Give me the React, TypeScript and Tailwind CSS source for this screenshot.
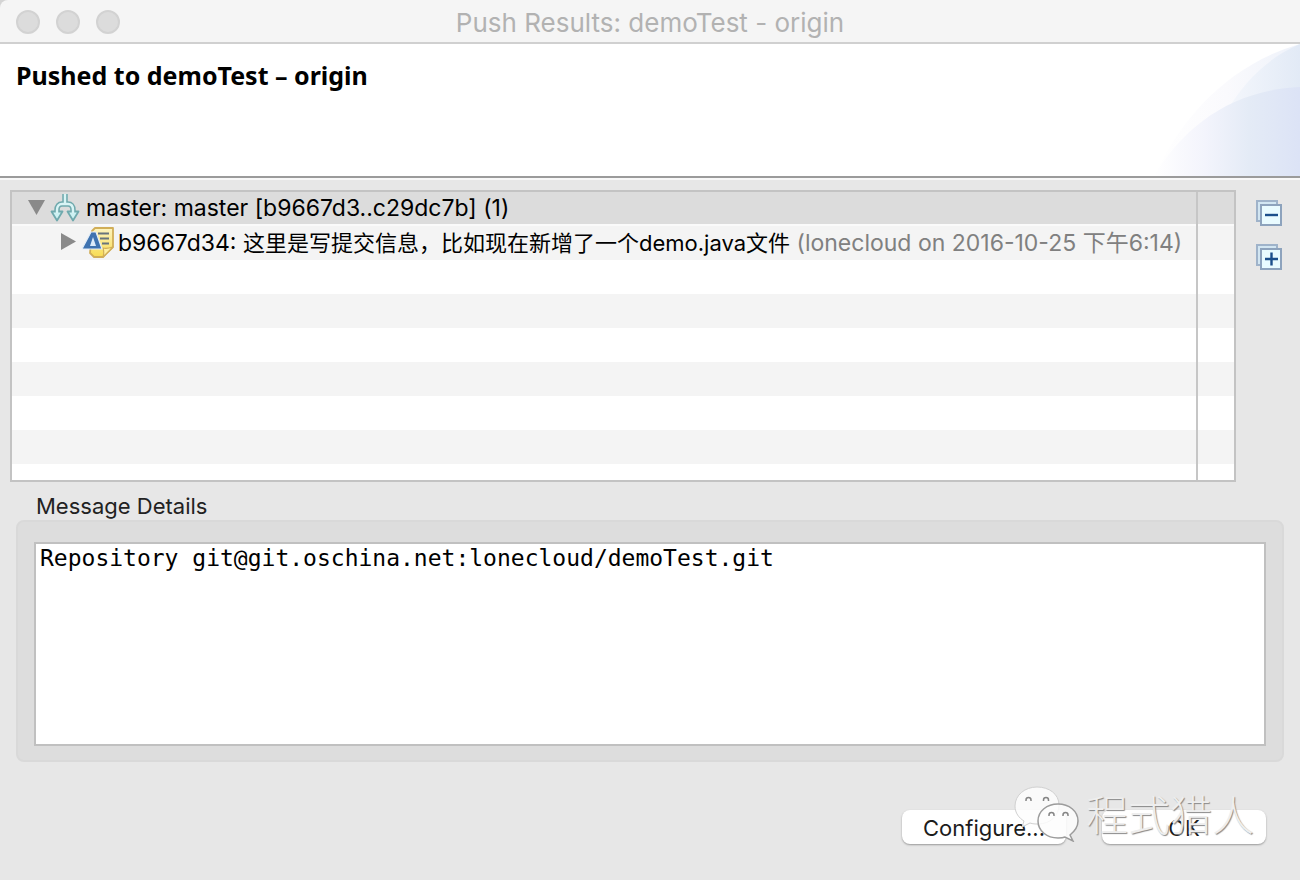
import type { ReactNode } from "react";

const emptyRows = [0, 1, 2, 3, 4, 5];

export default function App() {
  return (
    <div className="min-h-screen flex flex-col bg-[#e7e7e7] font-['Inter','Noto_Sans_CJK_SC',sans-serif] text-[22px] text-black">
      <TitleBar title="Push Results: demoTest - origin" />
      <DialogHeader title="Pushed to demoTest – origin" />

      <main className="grow flex flex-col pt-3">
        <div className="flex">
          <ResultTree />
          <div className="w-16 shrink-0 flex flex-col items-center gap-4 pt-2 pl-[2px]">
            <ToolButton label="Collapse All">
              <path d="M10 17h13" />
            </ToolButton>
            <ToolButton label="Expand All">
              <path d="M10 17h13M16.500 10.500v13" />
            </ToolButton>
          </div>
        </div>

        <MessageDetails />

        <div className="relative flex justify-end gap-9 mt-12 pr-[34px] pb-9">
          <DialogButton>Configure...</DialogButton>
          <DialogButton>OK</DialogButton>
          <Watermark />
        </div>
      </main>
    </div>
  );
}

function TitleBar({ title }: { title: string }) {
  return (
    <div className="bg-[#d4d4d4]">
      <div className="h-11 flex items-center px-4 bg-[#f5f5f5] border-b-2 border-[#d0d0d0] rounded-tl-lg">
        <div className="w-26 flex gap-4">
          <WindowDot label="Close" />
          <WindowDot label="Minimize" />
          <WindowDot label="Zoom" />
        </div>
        <h1 className="grow pt-1 text-center text-[26px] leading-9 text-[#b2b2b2]">
          {title}
        </h1>
        <div className="w-26" />
      </div>
    </div>
  );
}

function WindowDot({ label }: { label: string }) {
  return (
    <button
      type="button"
      aria-label={label}
      className="size-6 mt-[2px] rounded-full bg-[#dcdcdc] border-2 border-[#d2d2d2]"
    />
  );
}

function DialogHeader({ title }: { title: string }) {
  return (
    <header className="h-[134px] flex justify-between bg-white border-b-2 border-[#9b9b9b] shadow-[0_2px_0_#f8f8f8]">
      <h2 className="pl-4 pt-4 font-['Noto_Sans',sans-serif] font-bold text-[25px] leading-[30px]">
        {title}
      </h2>
      <svg width="150" height="132" viewBox="0 0 150 132" aria-hidden="true">
        <defs>
          <linearGradient id="outer" x1="0" x2="1">
            <stop offset="0" stopColor="#ffffff" />
            <stop offset="0.5" stopColor="#fafafd" />
            <stop offset="1" stopColor="#eef2fa" />
          </linearGradient>
          <linearGradient id="middle" x1="0" x2="1">
            <stop offset="0" stopColor="#fafbfe" />
            <stop offset="1" stopColor="#e2eaf6" />
          </linearGradient>
          <linearGradient id="inner" x1="0" x2="1">
            <stop offset="0" stopColor="#ffffff" />
            <stop offset="0.35" stopColor="#f3f4fc" />
            <stop offset="0.65" stopColor="#e4ebf6" />
            <stop offset="1" stopColor="#dce3f6" />
          </linearGradient>
        </defs>
        <path d="M4 132C32 72 80 20 150 0V132Z" fill="url(#outer)" />
        <path d="M54 132C64 74 98 22 150 0V132Z" fill="url(#middle)" />
        <path d="M4 132C34 82 82 46 150 43V132Z" fill="url(#inner)" />
      </svg>
    </header>
  );
}

function ResultTree() {
  return (
    <div
      role="tree"
      aria-label="Push results"
      className="relative grow h-[292px] ml-[10px] border-2 border-[#c3c3c3] bg-white text-[23px] overflow-hidden"
    >
      <div
        role="treeitem"
        aria-expanded="true"
        aria-selected="true"
        className="h-[34px] flex items-center pl-4 bg-[#dcdcdc] border-b-2 border-[#fafafa] whitespace-nowrap"
      >
        <svg width="18" height="16" viewBox="0 0 18 16" aria-hidden="true">
          <path d="M0 0h17L8.500 15z" fill="#8a8a8a" />
        </svg>
        <BranchIcon />
        <span className="ml-1">master: master [b9667d3..c29dc7b] (1)</span>
      </div>
      <div
        role="treeitem"
        aria-expanded="false"
        aria-selected="false"
        className="h-[34px] flex items-center pl-12 bg-[#f4f4f4] whitespace-nowrap leading-8"
      >
        <svg width="16" height="20" viewBox="0 0 16 20" aria-hidden="true">
          <path d="M1 0v17l15-8.500z" fill="#8a8a8a" />
        </svg>
        <CommitIcon />
        <span className="ml-1">
          b9667d34:{" "}
          <span className="text-[22px]">
            这里是写提交信息，比如现在新增了一个demo.java文件
          </span>{" "}
          <span className="text-[#808080]">
            (lonecloud on 2016-10-25 下午6:14)
          </span>
        </span>
      </div>
      {emptyRows.map((row) => (
        <div key={row} className="h-[34px] odd:bg-white even:bg-[#f4f4f4]" />
      ))}
      <div className="absolute inset-y-0 right-9 w-[2px] bg-[#c6c6c6]" />
    </div>
  );
}

function BranchIcon() {
  return (
    <svg
      className="ml-1"
      width="32"
      height="30"
      viewBox="0 0 32 30"
      aria-hidden="true"
    >
      <path
        d="M15 1v9M7 20v-3c0-4 2-6 5-6h6c3 0 5 2 5 6v3"
        fill="none"
        stroke="#6fa9ad"
        strokeWidth="5.500"
      />
      <path
        d="M1.500 18.500h11L7 27.500zM17.500 18.500h11L23 27.500z"
        fill="#cdf1f2"
        stroke="#6fa9ad"
        strokeWidth="1.800"
        strokeLinejoin="round"
      />
      <path
        d="M15 1v10M7 20v-3c0-4 2-6 5-6h6c3 0 5 2 5 6v3"
        fill="none"
        stroke="#d9f4f5"
        strokeWidth="2.400"
      />
    </svg>
  );
}

function CommitIcon() {
  return (
    <svg
      className="ml-[6px]"
      width="32"
      height="32"
      viewBox="0 0 32 32"
      aria-hidden="true"
    >
      <defs>
        <linearGradient id="note" x1="0" y1="0" x2="0" y2="1">
          <stop offset="0" stopColor="#fdf4c0" />
          <stop offset="1" stopColor="#f8dc52" />
        </linearGradient>
      </defs>
      <path
        d="M10 4l3-3h18v19l-10 10H12l-4-4z"
        fill="url(#note)"
        stroke="#d1ae58"
        strokeWidth="1.800"
        strokeLinejoin="round"
      />
      <path
        d="M21 30c1-3 1-6 0-9 3 1 7 0 10-1z"
        fill="#fff0a0"
        stroke="#d1ae58"
        strokeWidth="1.200"
        strokeLinejoin="round"
      />
      <path
        d="M16 6.500h11M18 11.500h9M20 16.500h7"
        stroke="#68747c"
        strokeWidth="1.800"
      />
      <path
        d="M0 22L9 5h5l6 17z"
        fill="#3f73b0"
        stroke="#e4eef8"
        strokeWidth="1.200"
      />
      <path d="M8 19l3-9 3 9z" fill="#dcebfa" />
    </svg>
  );
}

function ToolButton({
  label,
  children,
}: {
  label: string;
  children: ReactNode;
}) {
  return (
    <button type="button" aria-label={label}>
      <svg className="block" width="28" height="28" viewBox="0 0 28 28">
        <path d="M2 3h20v20H2z" fill="#d2e6f2" stroke="#9fb3ca" strokeWidth="2" />
        <path d="M6 7h20v20H6z" fill="#e9fbff" stroke="#8da3bd" strokeWidth="2" />
        <g stroke="#1c4f8b" strokeWidth="2.400">
          {children}
        </g>
      </svg>
    </button>
  );
}

function MessageDetails() {
  return (
    <section className="px-4 pt-2">
      <label
        htmlFor="details"
        className="block pl-5 pt-[2px] leading-7 text-[#222222]"
      >
        Message Details
      </label>
      <div className="px-4 pt-5 pb-[14px] bg-[#dddddd] border-2 border-[#d9d9d9] rounded-lg">
        <textarea
          id="details"
          readOnly
          className="block w-full h-[204px] px-1 bg-white border-2 border-[#c0c0c0] resize-none outline-none font-['DejaVu_Sans_Mono',monospace] text-[23px] leading-7"
          defaultValue="Repository git@git.oschina.net:lonecloud/demoTest.git"
        />
      </div>
    </section>
  );
}

function DialogButton({ children }: { children: ReactNode }) {
  return (
    <button
      type="button"
      className="w-[164px] h-[34px] rounded-lg bg-white text-center leading-9 text-[#1c1c1c] shadow-[0_1px_2px_#999999]"
    >
      {children}
    </button>
  );
}

function Watermark() {
  return (
    <div className="absolute right-[46px] -top-[26px] flex items-center gap-1 pointer-events-none">
      <svg width="68" height="58" viewBox="0 0 68 58" aria-hidden="true">
        <path
          d="M23 3C11 3 1 11 1 22c0 7 4 12 9 15l-2 6 8-4c3 1 5 1 8 1 12 0 21-8 21-19S35 3 23 3z"
          fill="#fdfdfd"
          fillOpacity="0.850"
          stroke="#d0d0d0"
          strokeWidth="1"
        />
        <path
          d="M44 20c-11 0-20 7-20 17s9 17 20 17c3 0 5 0 7-1l8 4-3-6c5-4 8-8 8-14 0-10-9-17-20-17z"
          fill="#fdfdfd"
          fillOpacity="0.850"
          stroke="#9c9c9c"
          strokeWidth="1.500"
        />
        <g fill="none" stroke="#858585" strokeWidth="1.500">
          <path d="M12 17v-1a2.500 2.500 0 0 1 5 0v1M29.500 17v-1a2.500 2.500 0 0 1 5 0v1" />
          <path d="M35 32v-1a2.500 2.500 0 0 1 5 0v1M49 32v-1a2.500 2.500 0 0 1 5 0v1" />
        </g>
      </svg>
      <span className="font-['Noto_Sans_CJK_SC',sans-serif] font-light text-[42px] leading-[54px] text-[#eeeeee] [text-shadow:1px_1px_1px_#888888]">
        程式猎人
      </span>
    </div>
  );
}
